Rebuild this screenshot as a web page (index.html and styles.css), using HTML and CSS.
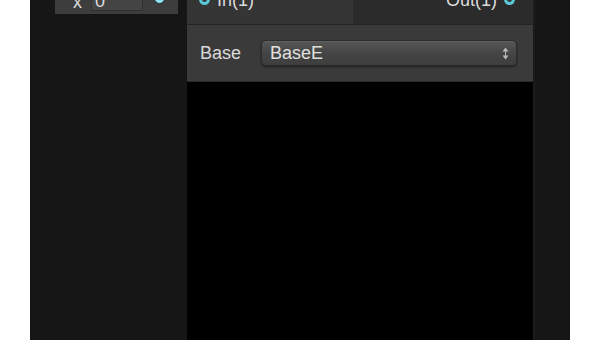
FILE: index.html
```html
<!DOCTYPE html>
<html lang="en">
<head>
    <meta charset="UTF-8">
    <title>Node Editor</title>
    <link rel="stylesheet" href="styles.css">
</head>
<body>
    <div class="stage">
        <div class="graph">
            <div class="node">
                <span class="node-label">x</span>
                <span class="node-field">0</span>
                <span class="port"></span>
            </div>
        </div>

        <div class="inspector">
            <div class="tabs">
                <div class="tab active">
                    <span class="port ring"></span>
                    <span class="tab-text">In(1)</span>
                </div>
                <div class="tab out">
                    <span class="tab-text">Out(1)</span>
                    <span class="port ring"></span>
                </div>
            </div>
            <div class="prop-row">
                <label class="prop-label">Base</label>
                <div class="select">
                    <span>BaseE</span>
                    <svg class="select-arrows" width="7" height="13" viewBox="0 0 7 13">
                        <path d="M3.5 0.5 L6.5 4.5 L0.5 4.5 Z" fill="#b8b8b8"/>
                        <rect x="3" y="4" width="1" height="5" fill="#b8b8b8"/>
                        <path d="M3.5 12.5 L6.5 8.5 L0.5 8.5 Z" fill="#b8b8b8"/>
                    </svg>
                </div>
            </div>
            <div class="viewport"></div>
        </div>

        <div class="sidebar"></div>
    </div>
</body>
</html>
```

FILE: styles.css
```css
* {
    margin: 0;
    padding: 0;
    box-sizing: border-box;
}

body {
    background: #fff;
    font-family: "Liberation Sans", Arial, sans-serif;
    font-size: 18px;
    color: #dcdcdc;
    overflow: hidden;
}

.stage {
    display: flex;
    width: 540px;
    height: 340px;
    margin-left: 30px;
    background: #161616;
}

/* graph area on the left */
.graph {
    width: 157px;
    padding-left: 25px;
}

.node {
    display: flex;
    align-items: flex-end;
    width: 123px;
    height: 36px;
    margin-top: -22px;
    padding: 0 0 3px 18px;
    background: #3d3d3d;
    line-height: 20px;
}

.node-label {
    width: 18px;
    margin-bottom: -1px;
}

.node-field {
    width: 52px;
    height: 26px;
    padding: 5px 0 0 3px;
    background: #444;
    border: 1px solid #323232;
    line-height: 20px;
}

.port {
    display: inline-block;
    width: 11px;
    height: 11px;
    border-radius: 50%;
    background: #8fe3f0;
    border: 1px solid #1f2a2c;
}

.node .port {
    margin: 0 0 7px 11px;
}

/* inspector panel */
.inspector {
    display: flex;
    flex-direction: column;
    width: 346px;
    background: #000;
}

.tabs {
    display: flex;
    height: 25px;
    border-bottom: 1px solid #252525;
    overflow: hidden;
}

.tab {
    display: flex;
    align-items: flex-start;
    gap: 7px;
    line-height: 20px;
}

.tab.active {
    width: 166px;
    padding-left: 12px;
    background: #353535;
}

.tab.out {
    flex: 1;
    justify-content: flex-end;
    padding-right: 18px;
    background: #2b2b2b;
}

.tab-text {
    margin-top: -10px;
}

.tab .port {
    margin-top: -6px;
}

.port.ring {
    background: #2f3a3c;
    border: 3px solid #5cc7d6;
}

.prop-row {
    display: flex;
    align-items: center;
    height: 57px;
    padding: 0 16px 0 13px;
    background: #3a3a3a;
    border-bottom: 1px solid #2a2a2a;
}

.prop-label {
    width: 61px;
    color: #dadada;
}

.select {
    display: flex;
    align-items: center;
    justify-content: space-between;
    flex: 1;
    height: 26px;
    padding: 0 7px 0 8px;
    border: 1px solid #2c2c2c;
    border-radius: 5px;
    background: linear-gradient(#565656, #444 55%, #3e3e3e);
    box-shadow: 0 1px 2px rgba(0, 0, 0, 0.5), inset 0 1px 0 #616161;
    color: #e0e0e0;
}

.viewport {
    flex: 1;
    background: #000;
}

.sidebar {
    flex: 1;
    border-left: 2px solid #1c1c1c;
}
```
